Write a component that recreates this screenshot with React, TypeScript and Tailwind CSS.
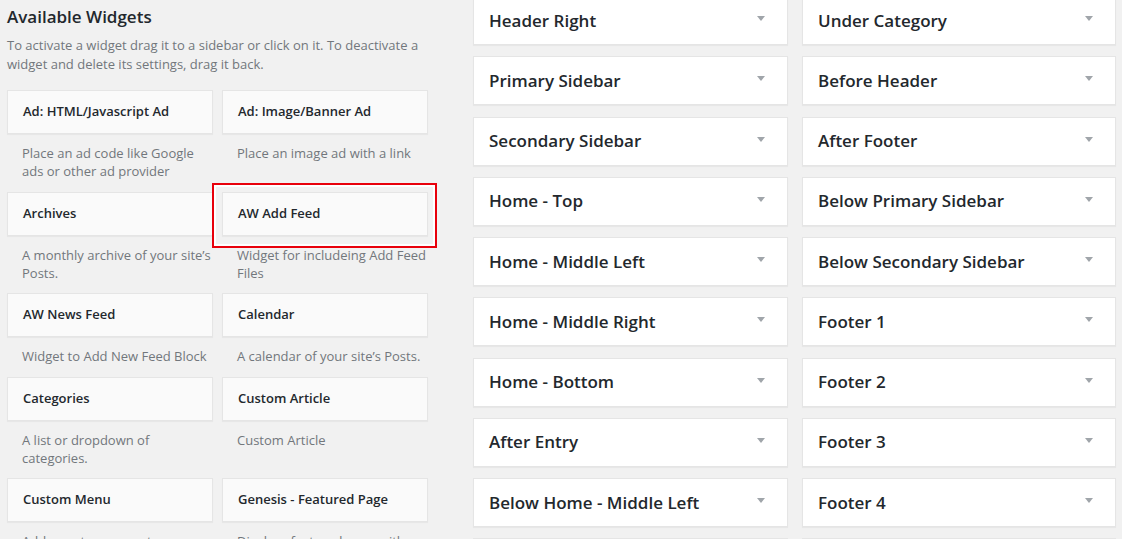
const widgets = [
  { title: 'Ad: HTML/Javascript Ad', desc: ['Place an ad code like Google', 'ads or other ad provider'] },
  { title: 'Ad: Image/Banner Ad', desc: ['Place an image ad with a link'] },
  { title: 'Archives', desc: ['A monthly archive of your site’s', 'Posts.'] },
  { title: 'AW Add Feed', desc: ['Widget for includeing Add Feed', 'Files'], marked: true },
  { title: 'AW News Feed', desc: ['Widget to Add New Feed Block'] },
  { title: 'Calendar', desc: ['A calendar of your site’s Posts.'] },
  { title: 'Categories', desc: ['A list or dropdown of', 'categories.'] },
  { title: 'Custom Article', desc: ['Custom Article'] },
  { title: 'Custom Menu', desc: ['Add a custom menu to your', 'sidebar.'] },
  { title: 'Genesis - Featured Page', desc: ['Displays featured page with', 'thumbnails'] },
];

const leftSidebars = [
  'Header Right',
  'Primary Sidebar',
  'Secondary Sidebar',
  'Home - Top',
  'Home - Middle Left',
  'Home - Middle Right',
  'Home - Bottom',
  'After Entry',
  'Below Home - Middle Left',
  'Below Home - Middle Right',
];

const rightSidebars = [
  'Under Category',
  'Before Header',
  'After Footer',
  'Below Primary Sidebar',
  'Below Secondary Sidebar',
  'Footer 1',
  'Footer 2',
  'Footer 3',
  'Footer 4',
  'Footer 5',
];

function Arrow() {
  return (
    <svg width="8" height="5" viewBox="0 0 8 5" className="shrink-0 self-start mt-[19px] mr-[22px]">
      <polygon points="0,0 8,0 4,5" fill="#a0a5aa" />
    </svg>
  );
}

function SidebarBox({ name }: { name: string }) {
  return (
    <div className="h-[49px] shrink-0 bg-white border border-[#e5e5e5] shadow-[0_1px_1px_rgba(0,0,0,0.04)] flex items-center justify-between">
      <h3 className="pl-[15px] text-[17px] font-semibold leading-[22px] text-[#23282d] whitespace-nowrap">{name}</h3>
      <Arrow />
    </div>
  );
}

function WidgetCell({ title, desc, marked }: { title: string; desc: string[]; marked?: boolean }) {
  return (
    <div className="relative">
      <div className="h-[44px] bg-[#fafafa] border border-[#e5e5e5] shadow-[0_1px_1px_rgba(0,0,0,0.04)] flex items-center">
        <h4 className="pl-[15px] text-[13px] font-semibold text-[#23282d] whitespace-nowrap">{title}</h4>
      </div>
      <div className="pl-[15px] pt-[10px] pb-[11.5px] text-[13px] leading-[18px] text-[#72777c]">
        {desc.map((line) => (
          <div key={line} className="whitespace-nowrap">{line}</div>
        ))}
      </div>
      {marked && (
        <div className="absolute left-[-10px] top-[-9px] w-[225px] h-[65px] border-2 border-[#e8000b] pointer-events-none">
          <div className="w-full h-full border-2 border-white" />
        </div>
      )}
    </div>
  );
}

export default function App() {
  return (
    <div className="w-[1122px] h-[539px] overflow-hidden bg-[#f1f1f1] flex font-['Open_Sans',sans-serif] text-[#23282d]">
      <div className="w-[428px] shrink-0 pl-[7px] pt-[6px]">
        <h3 className="text-[17px] font-semibold leading-[22px]">Available Widgets</h3>
        <p className="mt-[8px] text-[13px] leading-[19px] text-[#72777c]">
          <span className="block whitespace-nowrap">To activate a widget drag it to a sidebar or click on it. To deactivate a</span>
          <span className="block whitespace-nowrap">widget and delete its settings, drag it back.</span>
        </p>
        <div className="mt-[16px] grid grid-cols-[206px_206px] gap-x-[9px]">
          {widgets.map((w) => (
            <WidgetCell key={w.title} title={w.title} desc={w.desc} marked={w.marked} />
          ))}
        </div>
      </div>
      <div className="ml-[45px] -mt-[4px] flex gap-[14px]">
        <div className="w-[315px] flex flex-col gap-[11.25px]">
          {leftSidebars.map((s) => (
            <SidebarBox key={s} name={s} />
          ))}
        </div>
        <div className="w-[314px] flex flex-col gap-[11.25px]">
          {rightSidebars.map((s) => (
            <SidebarBox key={s} name={s} />
          ))}
        </div>
      </div>
    </div>
  );
}
